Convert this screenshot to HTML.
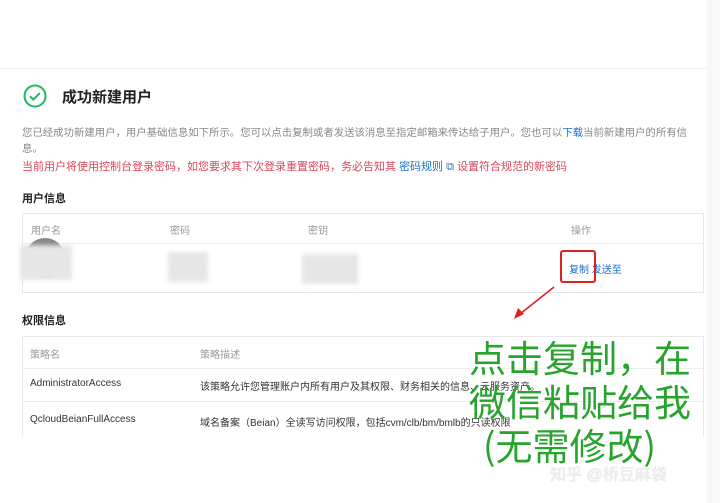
<!DOCTYPE html>
<html><head><meta charset="utf-8"><style>
*{margin:0;padding:0;box-sizing:border-box}
body{width:720px;height:503px;overflow:hidden;background:#fff;font-family:"Liberation Sans","Noto Sans CJK SC",sans-serif;position:relative}
.a{position:absolute;white-space:nowrap}
.g{color:#888;font-size:10.4px}
.tb{position:absolute;left:22px;width:682px;border:1px solid #e8e8e8}
.blur{position:absolute;background:#e6e6e6;filter:blur(2px)}
</style></head><body>
<div class="a" style="left:0;top:68px;width:720px;height:1px;background:#eee"></div>
<div class="a" style="left:707px;top:0;width:13px;height:503px;background:#f8f8f8"></div>
<svg class="a" style="left:23px;top:84px" width="24" height="24" viewBox="0 0 24 24"><circle cx="12" cy="12" r="10.5" fill="none" stroke="#1fb95e" stroke-width="2"/><path d="M7 12.3l3.3 3.3 6.5-6.5" fill="none" stroke="#1fb95e" stroke-width="2"/></svg>
<div class="a" style="left:62px;top:86px;font-size:15px;font-weight:bold;color:#222">成功新建用户</div>
<div class="a g" style="left:22px;top:124px">您已经成功新建用户，用户基础信息如下所示。您可以点击复制或者发送该消息至指定邮箱来传达给子用户。您也可以<span style="color:#1a6fd1">下载</span>当前新建用户的所有信</div>
<div class="a g" style="left:22px;top:140px">息。</div>
<div class="a" style="left:22px;top:158px;font-size:11px;color:#d9475b">当前用户将使用控制台登录密码，如您要求其下次登录重置密码，务必告知其 <span style="color:#1a6fd1">密码规则 ⧉</span> 设置符合规范的新密码</div>
<div class="a" style="left:22px;top:190px;font-size:11px;font-weight:bold;color:#222">用户信息</div>
<div class="tb" style="top:213px;height:80px">
<div style="height:30px;border-bottom:1px solid #eee;position:relative;font-size:10px;color:#999">
<span class="a" style="left:8px;top:8px">用户名</span><span class="a" style="left:147px;top:8px">密码</span><span class="a" style="left:285px;top:8px">密钥</span><span class="a" style="left:548px;top:8px">操作</span></div>
</div>
<div class="a" style="left:25px;top:238px;width:40px;height:40px;border-radius:50%;background:#888"></div>
<div class="blur" style="left:20px;top:245px;width:52px;height:35px"></div>
<div class="blur" style="left:168px;top:252px;width:40px;height:30px"></div>
<div class="blur" style="left:302px;top:254px;width:56px;height:30px"></div>
<div class="a" style="left:569px;top:261px;font-size:10px;color:#1a6fd1">复制 发送至</div>
<div class="a" style="left:560px;top:250px;width:36px;height:33px;border:2px solid #e02020;border-radius:3px"></div>
<svg class="a" style="left:508px;top:284px" width="50" height="40"><path d="M46 3L12 30" stroke="#e02020" stroke-width="1.6"/><path d="M6 35l4-11 6 6z" fill="#e02020"/></svg>
<div class="a" style="left:22px;top:312px;font-size:11px;font-weight:bold;color:#222">权限信息</div>
<div class="tb" style="top:336px;height:100px;border-bottom:none">
<div style="height:32px;border-bottom:1px solid #eee"></div>
<div style="height:33px;border-bottom:1px solid #eee"></div>
</div>
<div class="a" style="left:30px;top:346px;font-size:10px;color:#999">策略名</div>
<div class="a" style="left:200px;top:346px;font-size:10px;color:#999">策略描述</div>
<div class="a" style="left:30px;top:378px;font-size:10px;color:#333">AdministratorAccess</div>
<div class="a" style="left:200px;top:378px;font-size:10px;color:#333">该策略允许您管理账户内所有用户及其权限、财务相关的信息、云服务资产。</div>
<div class="a" style="left:30px;top:414px;font-size:10px;color:#333">QcloudBeianFullAccess</div>
<div class="a" style="left:200px;top:414px;font-size:10px;color:#333">域名备案（Beian）全读写访问权限，包括cvm/clb/bm/bmlb的只读权限</div>
<div class="a" style="left:469px;top:334px;font-size:37px;line-height:44px;color:#27a32e;font-family:'Noto Sans CJK SC',sans-serif">点击复制，在<br>微信粘贴给我<br><span style="margin-left:14px">(无需修改)</span></div>
<div class="a" style="left:550px;top:461px;font-size:16px;color:#eee;text-shadow:0 0 1px #ccc">知乎 @桥豆麻袋</div>
</body></html>
